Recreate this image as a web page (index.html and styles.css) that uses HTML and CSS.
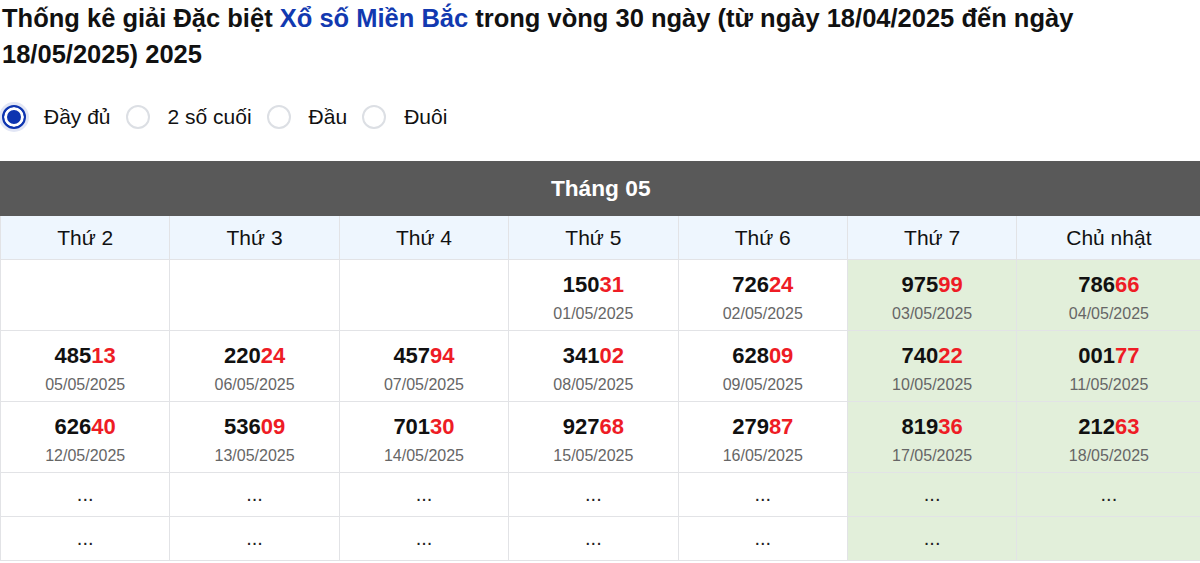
FILE: index.html
```html
<!DOCTYPE html>
<html lang="vi">
<head>
<meta charset="utf-8">
<title>Thống kê giải Đặc biệt</title>
<link rel="stylesheet" href="styles.css">
</head>
<body>
<h1 class="title">Thống kê giải Đặc biệt <span class="title-link">Xổ số Miền Bắc</span> trong vòng 30 ngày (từ ngày 18/04/2025 đến ngày 18/05/2025) 2025</h1>
<div class="options">
  <label class="opt"><span class="radio checked"></span><span class="opt-text">Đầy đủ</span></label>
  <label class="opt"><span class="radio"></span><span class="opt-text">2 số cuối</span></label>
  <label class="opt"><span class="radio"></span><span class="opt-text">Đầu</span></label>
  <label class="opt"><span class="radio"></span><span class="opt-text">Đuôi</span></label>
</div>
<table class="cal">
  <colgroup>
    <col class="c-n"><col class="c-n"><col class="c-n"><col class="c-n"><col class="c-n"><col class="c-n"><col class="c-last">
  </colgroup>
  <thead>
    <tr><th colspan="7" class="month">Tháng 05</th></tr>
    <tr class="days"><th>Thứ 2</th><th>Thứ 3</th><th>Thứ 4</th><th>Thứ 5</th><th>Thứ 6</th><th>Thứ 7</th><th>Chủ nhật</th></tr>
  </thead>
  <tbody>
    <tr class="r">
      <td></td><td></td><td></td>
      <td><div class="num">150<em>31</em></div><div class="date">01/05/2025</div></td>
      <td><div class="num">726<em>24</em></div><div class="date">02/05/2025</div></td>
      <td class="we"><div class="num">975<em>99</em></div><div class="date">03/05/2025</div></td>
      <td class="we"><div class="num">786<em>66</em></div><div class="date">04/05/2025</div></td>
    </tr>
    <tr class="r">
      <td><div class="num">485<em>13</em></div><div class="date">05/05/2025</div></td>
      <td><div class="num">220<em>24</em></div><div class="date">06/05/2025</div></td>
      <td><div class="num">457<em>94</em></div><div class="date">07/05/2025</div></td>
      <td><div class="num">341<em>02</em></div><div class="date">08/05/2025</div></td>
      <td><div class="num">628<em>09</em></div><div class="date">09/05/2025</div></td>
      <td class="we"><div class="num">740<em>22</em></div><div class="date">10/05/2025</div></td>
      <td class="we"><div class="num">001<em>77</em></div><div class="date">11/05/2025</div></td>
    </tr>
    <tr class="r">
      <td><div class="num">626<em>40</em></div><div class="date">12/05/2025</div></td>
      <td><div class="num">536<em>09</em></div><div class="date">13/05/2025</div></td>
      <td><div class="num">701<em>30</em></div><div class="date">14/05/2025</div></td>
      <td><div class="num">927<em>68</em></div><div class="date">15/05/2025</div></td>
      <td><div class="num">279<em>87</em></div><div class="date">16/05/2025</div></td>
      <td class="we"><div class="num">819<em>36</em></div><div class="date">17/05/2025</div></td>
      <td class="we"><div class="num">212<em>63</em></div><div class="date">18/05/2025</div></td>
    </tr>
    <tr class="d">
      <td>...</td><td>...</td><td>...</td><td>...</td><td>...</td><td class="we">...</td><td class="we">...</td>
    </tr>
    <tr class="d">
      <td>...</td><td>...</td><td>...</td><td>...</td><td>...</td><td class="we">...</td><td class="we"></td>
    </tr>
  </tbody>
</table>
</body>
</html>
```
FILE: styles.css
```css
html, body {
  margin: 0;
  padding: 0;
  background: #fff;
}
body {
  font-family: "Liberation Sans", Arial, sans-serif;
  color: #000;
}
.title {
  margin: 0;
  padding: 0 0 0 2px;
  font-size: 25.5px;
  line-height: 36px;
  font-weight: 700;
  color: #111;
}
.title-link {
  color: #1239b0;
}
.options {
  display: flex;
  align-items: center;
  margin-top: 29px;
  height: 32px;
  padding-left: 2px;
}
.opt {
  display: flex;
  align-items: center;
  margin-right: 15px;
}
.radio {
  box-sizing: border-box;
  width: 24px;
  height: 24px;
  border-radius: 50%;
  border: 2px solid #dcdfe4;
  background: #fff;
  margin-right: 18px;
}
.radio.checked {
  border: 2px solid #0d34b0;
  background: #0d34b0;
  box-shadow: inset 0 0 0 3px #fff, 0 0 0 3px rgba(13, 52, 176, 0.12);
}
.opt-text {
  font-size: 21px;
  color: #111;
}
.cal {
  margin-top: 28px;
  width: 1200px;
  border-collapse: collapse;
  table-layout: fixed;
}
.c-n { width: 169.4px; }
.c-last { width: 184px; }
.cal th, .cal td {
  border: 1px solid #e2e3e6;
  text-align: center;
  padding: 0;
}
.month {
  background: #595959;
  color: #fff;
  font-size: 22.7px;
  font-weight: 700;
  height: 53px;
  border-color: #595959 !important;
}
.days th {
  background: #eef6fe;
  font-weight: 400;
  font-size: 21px;
  height: 43px;
  color: #111;
}
.r td {
  height: 70px;
  vertical-align: top;
}
.num {
  font-size: 22px;
  font-weight: 700;
  line-height: 26px;
  margin-top: 12px;
  color: #111;
}
.num em {
  font-style: normal;
  color: #ee1c25;
}
.date {
  font-size: 16px;
  line-height: 20px;
  margin-top: 6px;
  color: #666;
}
.d td {
  height: 43px;
  font-size: 20px;
  color: #222;
}
.we {
  background: #e2efda;
}
```
